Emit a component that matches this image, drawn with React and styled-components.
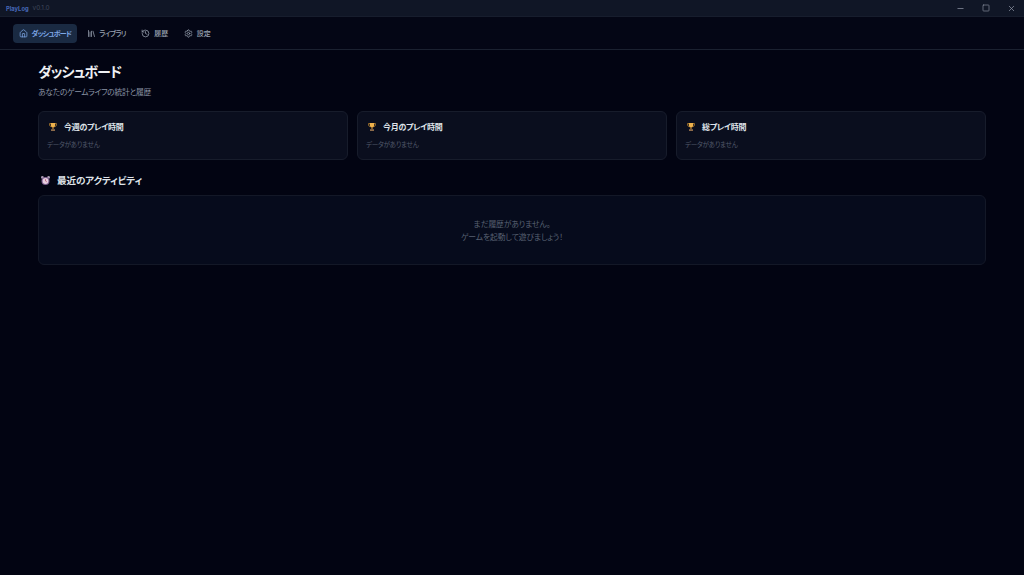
import React from 'react';
import styled, { createGlobalStyle } from 'styled-components';
import { House, Library, History, Settings, Minus, Square, X } from 'lucide-react';

const GlobalStyle = createGlobalStyle`
  html, body { margin: 0; padding: 0; height: 100%; background: #020412; }
  body {
    font-family: "Inter", "Noto Sans CJK JP", sans-serif;
    font-feature-settings: "palt";
  }
  #root { height: 100%; }
  * { box-sizing: border-box; }
`;

const Shell = styled.div`
  height: 575px;
  display: flex;
  flex-direction: column;
  overflow: hidden;
  background: #020412;
`;

const TitleBar = styled.header`
  height: 17px;
  flex: none;
  display: flex;
  align-items: center;
  justify-content: space-between;
  padding-left: 6px;
  background: #101626;
  border-bottom: 1px solid #171d2d;
`;

const AppName = styled.div`
  display: flex;
  align-items: center;
  gap: 4px;
`;

const AppTitle = styled.span`
  font-size: 5.8px;
  font-weight: 700;
  color: #4668b8;
`;

const AppVersion = styled.span`
  font-size: 6.4px;
  color: #3f475a;
`;

const WindowControls = styled.div`
  display: flex;
  align-items: center;
`;

const WindowButton = styled.div`
  width: 25.5px;
  height: 16px;
  display: flex;
  align-items: center;
  justify-content: center;
  color: #8b92a1;
`;

const NavBar = styled.nav`
  height: 33px;
  flex: none;
  display: flex;
  align-items: center;
  gap: 3.5px;
  padding: 0 13px;
  background: #040615;
  border-bottom: 1px solid #1b2130;
`;

const NavItem = styled.div`
  height: 19px;
  display: flex;
  align-items: center;
  gap: ${({ $tight }) => ($tight ? '3.5px' : '4px')};
  padding: 0 6px;
  border-radius: 4px;
  font-size: 7px;
  letter-spacing: ${({ $tight }) => ($tight ? '-0.75px' : '0')};
  font-weight: ${({ $active }) => ($active ? 700 : 500)};
  color: ${({ $active }) => ($active ? '#7da7e6' : '#9aa3b2')};
  background: ${({ $active }) => ($active ? '#1a2a42' : 'transparent')};
`;

const Main = styled.main`
  flex: 1;
  padding: 12px 38px 0;
`;

const PageTitle = styled.h1`
  margin: 0;
  height: 20px;
  line-height: 20px;
  font-size: 14px;
  letter-spacing: -1px;
  font-weight: 700;
  color: #eef0f4;
`;

const PageSubtitle = styled.p`
  margin: 3px 0 0;
  height: 14px;
  line-height: 14px;
  font-size: 7.8px;
  letter-spacing: -0.3px;
  color: #8a93a4;
`;

const CardGrid = styled.section`
  display: grid;
  grid-template-columns: repeat(3, 1fr);
  gap: 9px;
  margin-top: 12px;
`;

const Card = styled.article`
  height: 49px;
  padding: 7px 8px;
  background: #0a0e1e;
  border: 1px solid #171c2b;
  border-radius: 6px;
`;

const CardHeading = styled.div`
  display: flex;
  align-items: center;
  gap: 6px;
  padding-left: 1px;
  height: 14px;
  font-size: 8px;
  letter-spacing: -0.3px;
  font-weight: 700;
  color: #dfe3e9;
`;

const CardEmpty = styled.div`
  margin-top: 6px;
  line-height: 12px;
  font-size: 6.6px;
  letter-spacing: -0.3px;
  color: #505869;
`;

const SectionHeading = styled.h2`
  margin: 13px 0 0;
  height: 14px;
  display: flex;
  align-items: center;
  gap: 6px;
  padding-left: 2px;
  font-size: 9.6px;
  letter-spacing: -0.15px;
  font-weight: 700;
  color: #dfe3e9;
`;

const EmptyPanel = styled.section`
  height: 70px;
  margin-top: 8px;
  padding-top: 2px;
  display: flex;
  flex-direction: column;
  align-items: center;
  justify-content: center;
  background: #060b1c;
  border: 1px solid #131827;
  border-radius: 6px;
  font-size: 7.8px;
  letter-spacing: -0.1px;
  line-height: 13px;
  color: #586172;
`;

const TrophyIcon = styled.svg`
  flex: none;
  margin-top: 2px;
`;

const Trophy = () => (
  <TrophyIcon width="10" height="10" viewBox="0 0 10 10">
    <path d="M1.5 1.5h7v1.5c0 1-.8 1.6-2 1.7h-3c-1.2-.1-2-.7-2-1.7z" fill="none" stroke="#a9782c" strokeWidth=".8" />
    <path d="M2.8 1h4.4v2.2c0 1.3-1 2.2-2.2 2.2s-2.2-.9-2.2-2.2z" fill="#eeb24d" />
    <rect x="4.4" y="5.2" width="1.2" height="2" fill="#c98a32" />
    <rect x="3" y="7.2" width="4" height="1.8" fill="#8c6a4a" />
  </TrophyIcon>
);

const AlarmClock = () => (
  <svg width="11" height="11" viewBox="0 0 11 11">
    <circle cx="2.4" cy="2.4" r="1.4" fill="#a99bb4" />
    <circle cx="8.6" cy="2.4" r="1.4" fill="#a99bb4" />
    <circle cx="5.5" cy="6" r="4" fill="#7d5f90" />
    <circle cx="5.5" cy="6" r="2.9" fill="#e8cfe0" />
    <path d="M5.5 4.2V6l1.3.8" fill="none" stroke="#b04a68" strokeWidth=".7" />
  </svg>
);

const navItems = [
  { label: 'ダッシュボード', Icon: House, active: true, tight: true },
  { label: 'ライブラリ', Icon: Library, tight: true },
  { label: '履歴', Icon: History },
  { label: '設定', Icon: Settings },
];

const stats = ['今週のプレイ時間', '今月のプレイ時間', '総プレイ時間'];

export default function App() {
  return (
    <Shell>
      <GlobalStyle />
      <TitleBar>
        <AppName>
          <AppTitle>PlayLog</AppTitle>
          <AppVersion>v0.1.0</AppVersion>
        </AppName>
        <WindowControls>
          <WindowButton><Minus size={9} /></WindowButton>
          <WindowButton><Square size={8} /></WindowButton>
          <WindowButton><X size={9} /></WindowButton>
        </WindowControls>
      </TitleBar>
      <NavBar>
        {navItems.map(({ label, Icon, active, tight }) => (
          <NavItem key={label} $active={active} $tight={tight}>
            <Icon size={9} />
            {label}
          </NavItem>
        ))}
      </NavBar>
      <Main>
        <PageTitle>ダッシュボード</PageTitle>
        <PageSubtitle>あなたのゲームライフの統計と履歴</PageSubtitle>
        <CardGrid>
          {stats.map((title) => (
            <Card key={title}>
              <CardHeading>
                <Trophy />
                {title}
              </CardHeading>
              <CardEmpty>データがありません</CardEmpty>
            </Card>
          ))}
        </CardGrid>
        <SectionHeading>
          <AlarmClock />
          最近のアクティビティ
        </SectionHeading>
        <EmptyPanel>
          <div>まだ履歴がありません。</div>
          <div>ゲームを起動して遊びましょう！</div>
        </EmptyPanel>
      </Main>
    </Shell>
  );
}
